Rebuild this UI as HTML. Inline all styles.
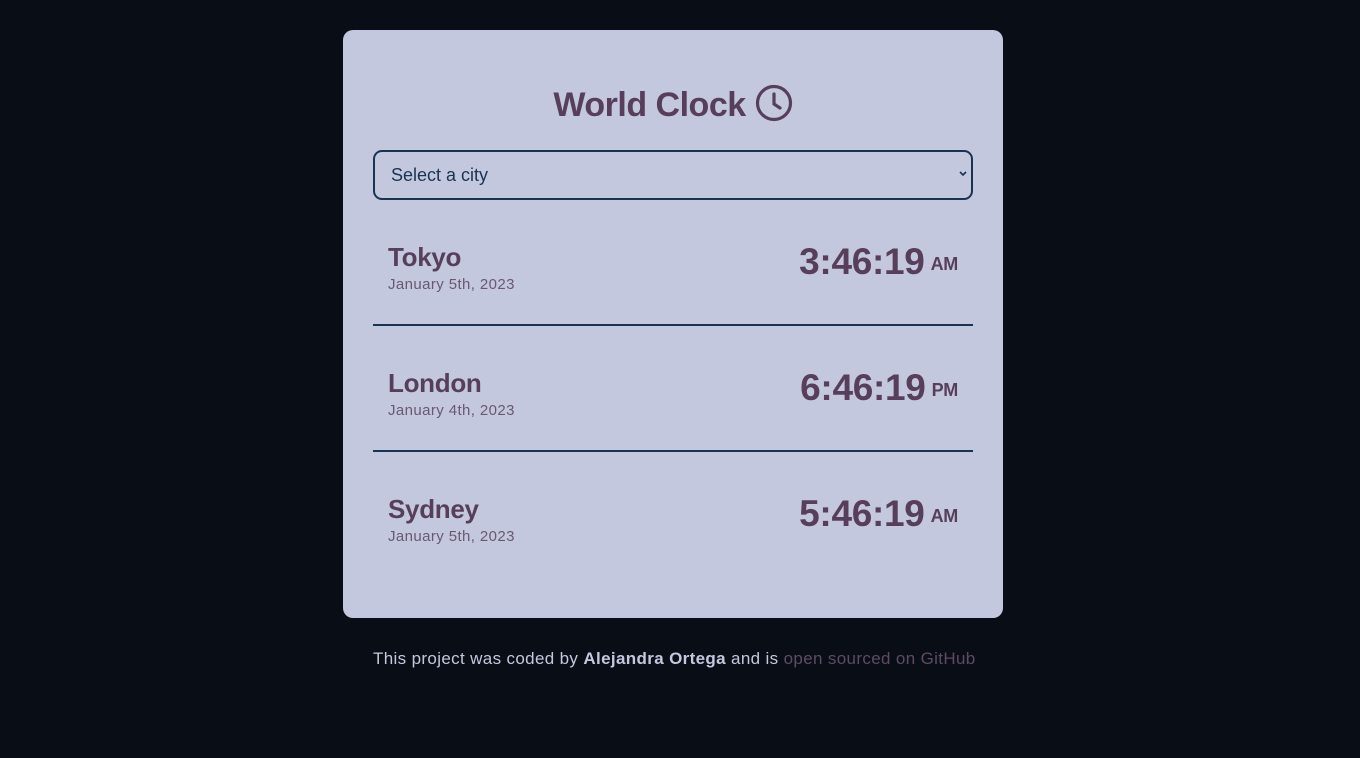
<!DOCTYPE html>
<html><head><style>
body{margin:0;background:#090d16;width:1360px;height:758px;font-family:"Liberation Sans",sans-serif;position:relative;overflow:hidden}
.card{position:absolute;left:343px;top:30px;width:660px;height:588px;background:#c3c8de;border-radius:10px}
.abs{position:absolute;white-space:nowrap}
.title{left:0;width:660px;text-align:center;top:54px;font-size:34px;font-weight:bold;color:#573f5b;letter-spacing:-0.5px}
.sel{left:30px;top:120px;width:596px;height:46px;border:2px solid #1b3352;border-radius:9px}
.sel span{position:absolute;left:16px;top:13px;font-size:18px;color:#1b3352}
.city{left:45px;font-size:26px;font-weight:bold;color:#573f5b;letter-spacing:-0.3px}
.date{left:45px;font-size:15px;color:#6a5872;letter-spacing:0.4px}
.time{right:45px;font-size:37px;font-weight:bold;color:#573f5b;letter-spacing:-0.3px}
.time small{font-size:18px;margin-left:6px;vertical-align:4px}
.hr{left:30px;width:600px;height:2px;background:#1b3352}
.foot{left:373px;top:649px;font-size:17px;color:#c3c8de;letter-spacing:0.35px}
</style></head><body>
<div class="card">
<div class="abs title">World Clock <svg width="38" height="38" viewBox="0 0 38 38" style="vertical-align:-6px"><circle cx="19" cy="19" r="16.5" fill="none" stroke="#573f5b" stroke-width="3.2"/><path d="M19 10v10l6 4" fill="none" stroke="#573f5b" stroke-width="3.2" stroke-linecap="round"/></svg></div>
<div class="abs sel"><span>Select a city</span><svg style="position:absolute;right:4px;top:19px" width="8" height="6" viewBox="0 0 8 6"><path d="M1 1l3 3 3-3" fill="none" stroke="#1b3352" stroke-width="1.6"/></svg></div>

<div class="abs city" style="top:212px">Tokyo</div>
<div class="abs date" style="top:246px">January 5th, 2023</div>
<div class="abs time" style="top:211px">3:46:19<small>AM</small></div>
<div class="abs hr" style="top:294px"></div>

<div class="abs city" style="top:338px">London</div>
<div class="abs date" style="top:372px">January 4th, 2023</div>
<div class="abs time" style="top:337px">6:46:19<small>PM</small></div>
<div class="abs hr" style="top:420px"></div>

<div class="abs city" style="top:464px">Sydney</div>
<div class="abs date" style="top:498px">January 5th, 2023</div>
<div class="abs time" style="top:463px">5:46:19<small>AM</small></div>
</div>
<div class="abs foot">This project was coded by <b>Alejandra Ortega</b> and is <span style="color:#5e4a65">open sourced on GitHub</span></div>
</body></html>
